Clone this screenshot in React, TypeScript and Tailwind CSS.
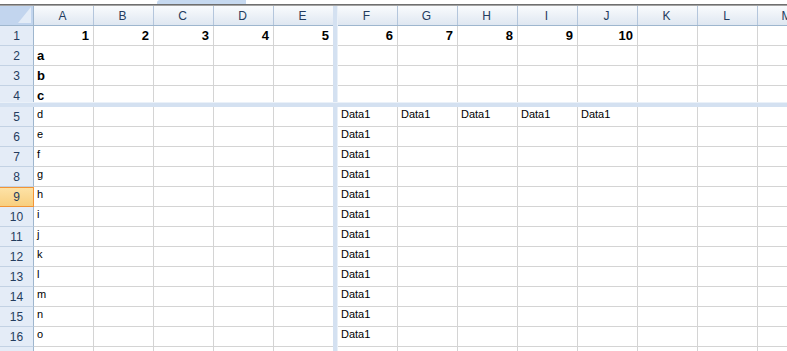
import React from "react";

const LEFT_COLS = ["A", "B", "C", "D", "E"];
const RIGHT_COLS = ["F", "G", "H", "I", "J", "K", "L", "M", "N"];

type CellData = { text?: string; bold?: boolean; right?: boolean };
type RowData = { n: number; cells: Record<string, CellData>; height?: number };

const topRows: RowData[] = [
  {
    n: 1,
    cells: Object.fromEntries(
      [...LEFT_COLS, ...RIGHT_COLS.slice(0, 5)].map((c, i) => [
        c,
        { text: String(i + 1), bold: true, right: true },
      ])
    ),
  },
  { n: 2, cells: { A: { text: "a", bold: true } } },
  { n: 3, cells: { A: { text: "b", bold: true } } },
  { n: 4, cells: { A: { text: "c", bold: true } } },
];

const letters = "defghijklmno".split("");
const bottomRows: RowData[] = [
  ...letters.map((l, i) => {
    const cells: Record<string, CellData> = { A: { text: l }, F: { text: "Data1" } };
    if (i === 0) {
      ["G", "H", "I", "J"].forEach((c) => (cells[c] = { text: "Data1" }));
    }
    return { n: i + 5, cells };
  }),
  { n: 17, cells: {} },
];

const SELECTED_ROW = 9;

function ColHeader({ label }: { label: string }) {
  return (
    <div className="w-[60px] h-full shrink-0 border-r border-[#b4c6dc] flex items-center justify-center text-[12px] text-[#243c5e] pr-[2px]">
      {label}
    </div>
  );
}

function HeaderBar({ cols, corner }: { cols: string[]; corner?: boolean }) {
  return (
    <div className="flex h-[20px] shrink-0 border-b border-[#9eb6ce] bg-gradient-to-b from-[#f9fbfd] to-[#dfe7f1]">
      {corner && (
        <div className="w-[34px] h-full shrink-0 border-r border-[#9eb6ce] bg-[#c2d5ee] relative">
          <svg className="absolute left-0 top-0" width="33" height="19" viewBox="0 0 33 19">
            <polygon points="31,1 31,17 18,17" fill="#e3ecf7" />
          </svg>
        </div>
      )}
      {cols.map((c) => (
        <ColHeader key={c} label={c} />
      ))}
    </div>
  );
}

function GridCell({ data, topAlign }: { data?: CellData; topAlign: boolean }) {
  return (
    <div
      className={`w-[60px] h-full shrink-0 border-r border-b border-[#d4d4d4] px-[3px] flex overflow-hidden whitespace-nowrap text-black ${
        data?.right ? "justify-end pr-[4px]" : "justify-start"
      } ${topAlign ? "items-start pt-[1px] text-[11px] leading-[13px]" : "items-center"} ${
        data?.bold ? "font-bold text-[13px]" : "text-[11px]"
      }`}
    >
      {data?.text}
    </div>
  );
}

function RowHeader({ n }: { n: number }) {
  const selected = n === SELECTED_ROW;
  return (
    <div
      className={`w-[34px] h-full shrink-0 border-r border-b flex items-center justify-center text-[12px] text-[#243c5e] ${
        selected
          ? "bg-gradient-to-b from-[#fde3a8] to-[#f8cf7f] border-r-[#f29436] border-b-[#f29436] shadow-[inset_0_1px_0_#f29436]"
          : "bg-[#e4ecf7] border-r-[#9eb6ce] border-b-[#c3d2e4]"
      }`}
    >
      {n}
    </div>
  );
}

function GridRow({
  row,
  cols,
  withHeader,
  topAlign,
}: {
  row: RowData;
  cols: string[];
  withHeader?: boolean;
  topAlign: boolean;
}) {
  return (
    <div className="flex h-[20px] shrink-0">
      {withHeader && <RowHeader n={row.n} />}
      {cols.map((c) => (
        <GridCell key={c} data={row.cells[c]} topAlign={topAlign} />
      ))}
    </div>
  );
}

function Pane({
  rows,
  cols,
  withHeader,
  showColHeader,
  topAlign,
  className,
}: {
  rows: RowData[];
  cols: string[];
  withHeader?: boolean;
  showColHeader?: boolean;
  topAlign: boolean;
  className: string;
}) {
  return (
    <div className={`flex flex-col overflow-hidden bg-white ${className}`}>
      {showColHeader && <HeaderBar cols={cols} corner={withHeader} />}
      {rows.map((r) => (
        <GridRow key={r.n} row={r} cols={cols} withHeader={withHeader} topAlign={topAlign} />
      ))}
    </div>
  );
}

export default function App() {
  return (
    <div className="w-[787px] h-[351px] overflow-hidden bg-white flex flex-col font-['Liberation_Sans',Arial,sans-serif]">
      {/* strip above the sheet */}
      <div className="h-[4px] shrink-0 flex">
        <div className="ml-[157px] w-[89px] h-full bg-[#c6d9f0] rounded-tl-[3px]" />
      </div>
      <div className="h-[1px] shrink-0 bg-[#6f6f6f]" />
      <div className="h-[1px] shrink-0 bg-[#a3a3a3]" />

      {/* frozen top panes */}
      <div className="flex h-[96px] shrink-0">
        <Pane rows={topRows} cols={LEFT_COLS} withHeader showColHeader topAlign={false} className="w-[333px] shrink-0" />
        <div className="w-[5px] shrink-0 bg-[#d4e1f1] border-r border-[#e9f0f8]" />
        <Pane rows={topRows} cols={RIGHT_COLS} showColHeader topAlign={false} className="flex-1" />
      </div>

      {/* horizontal split bar */}
      <div className="h-[5px] shrink-0 bg-[#d4e1f1] border-t border-[#eaf1f9]" />

      {/* scrolling panes */}
      <div className="flex flex-1 min-h-0">
        <Pane rows={bottomRows} cols={LEFT_COLS} withHeader topAlign className="w-[333px] shrink-0" />
        <div className="w-[5px] shrink-0 bg-[#d4e1f1] border-r border-[#e9f0f8]" />
        <Pane rows={bottomRows} cols={RIGHT_COLS} topAlign className="flex-1" />
      </div>
    </div>
  );
}
